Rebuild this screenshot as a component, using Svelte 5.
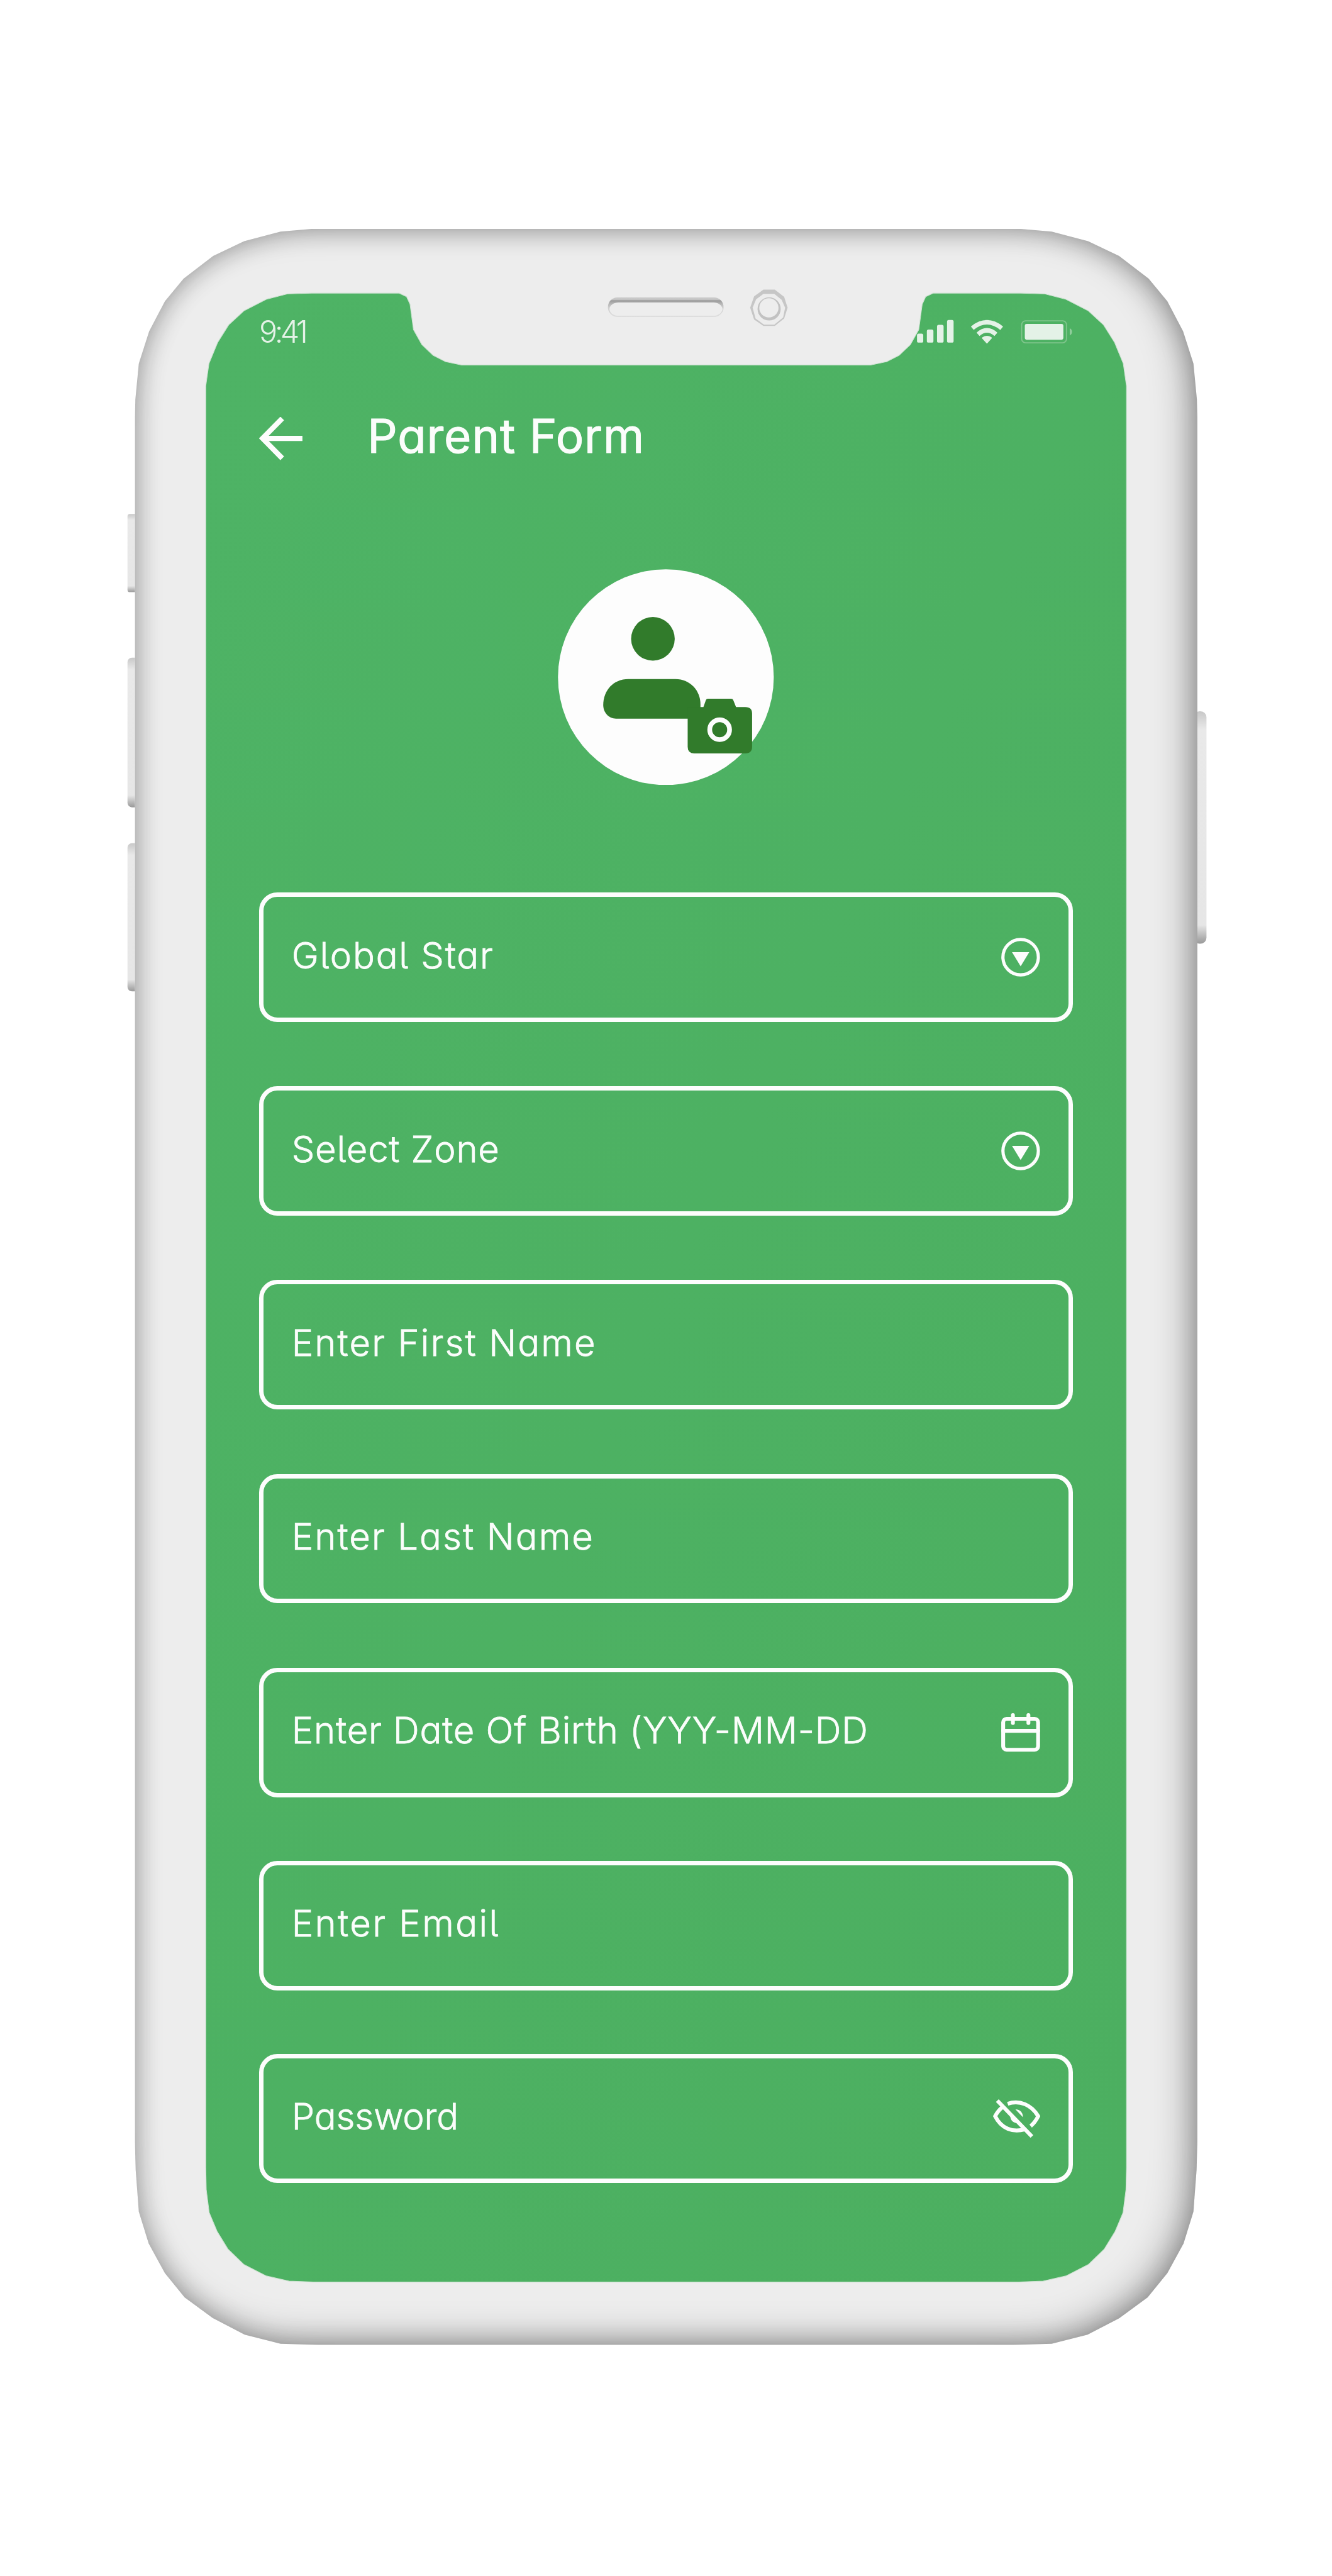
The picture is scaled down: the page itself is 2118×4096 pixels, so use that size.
<script>
  const fields = [
    { label: 'Global Star', icon: 'dropdown', tracking: 0.031 },
    { label: 'Select Zone', icon: 'dropdown', tracking: 0.014 },
    { label: 'Enter First Name', icon: '', tracking: 0.037 },
    { label: 'Enter Last Name', icon: '', tracking: 0.036 },
    { label: 'Enter Date Of Birth (YYY-MM-DD', icon: 'calendar', tracking: 0.015 },
    { label: 'Enter Email', icon: '', tracking: 0.042 },
    { label: 'Password', icon: 'eye-off', tracking: -0.001 }
  ];

  // Corner profiles of the handset, listed for the left half and mirrored to the right.
  const mirror = (pts) => pts.map(([x, y]) => [2706.5 - x, y]).reverse();
  const toPath = (pts) => 'M' + pts.map((p) => p.join(' ')).join('L') + 'Z';

  const bodyLeft = [
    [570, 4761.5], [497, 4743], [432, 4709], [375, 4667], [335, 4618], [302, 4557.6],
    [282, 4493], [275.6, 4408], [274, 4350], [274, 849], [275, 811], [282, 738.5],
    [303, 673], [335, 612], [373, 566], [433, 520], [496, 490], [570, 470.6], [633, 465]
  ];
  const screenLeft = [
    [636, 4636], [587, 4634], [541, 4623.6], [495, 4600], [463, 4569], [441, 4533],
    [425, 4495], [419, 4448], [418, 4403.6], [418, 784], [424.5, 738.5], [442, 696],
    [464.5, 660], [496, 631], [542, 607.6], [584, 597], [633, 595.5], [811, 595.5],
    [826, 602.6], [833, 618], [840, 669.6], [857, 700], [880, 722], [905, 734.7], [938, 741.5]
  ];
  const body = toPath([[647, 4763.5], ...bodyLeft, ...mirror([[647, 4763.5], ...bodyLeft])]);
  const screen = toPath([...screenLeft, ...mirror(screenLeft)]);
  const outside = 'M-500 -500H3200V5700H-500Z' + body;
</script>

<main class="stage">
  <svg class="handset" viewBox="0 0 2706 5232" aria-hidden="true">
    <defs>
      <clipPath id="body-clip"><path d={body} /></clipPath>
      <filter id="soft" filterUnits="userSpaceOnUse" x="0" y="200" width="2706" height="4900">
        <feGaussianBlur stdDeviation="26" />
      </filter>
      <filter id="softer" filterUnits="userSpaceOnUse" x="0" y="200" width="2706" height="4900">
        <feGaussianBlur stdDeviation="38" />
      </filter>
      <linearGradient id="key" x1="0" x2="0" y1="0" y2="1">
        <stop offset="0" stop-color="#c8c8c8" />
        <stop offset=".08" stop-color="#e9e9e9" />
        <stop offset=".92" stop-color="#e6e6e6" />
        <stop offset="1" stop-color="#999" />
      </linearGradient>
      <linearGradient id="green" x1="0" y1="0" x2="1" y2="1">
        <stop offset="0" stop-color="#4eb365" />
        <stop offset="1" stop-color="#4caf60" />
      </linearGradient>
      <linearGradient id="slot" x1="0" x2="0" y1="0" y2="1">
        <stop offset="0" stop-color="#cfcfcf" />
        <stop offset=".12" stop-color="#c2c2c2" />
        <stop offset=".17" stop-color="#999" />
        <stop offset=".25" stop-color="#aaa" />
        <stop offset=".5" stop-color="#ccc" />
        <stop offset="1" stop-color="#dedede" />
      </linearGradient>
    </defs>

    <rect x="259" y="1044" width="24" height="159" rx="5" fill="url(#key)" />
    <rect x="259" y="1336" width="24" height="304" rx="9" fill="url(#key)" />
    <rect x="259" y="1713" width="24" height="301" rx="9" fill="url(#key)" />
    <rect x="2425" y="1445" width="26" height="472" rx="12" fill="url(#key)" />

    <path d={body} fill="#ededed" />
    <g clip-path="url(#body-clip)" fill-rule="evenodd">
      <path d={outside} fill="#000" opacity=".29" filter="url(#soft)" />
      <path d={outside} fill="#000" opacity=".26" filter="url(#softer)" transform="translate(-20 -12)" />
    </g>
    <path d={screen} fill="url(#green)" stroke="#cfe3d3" stroke-width="1.5" />

    <rect x="1235" y="604" width="235" height="40" rx="20" fill="url(#slot)" />
    <path d="M1238 628C1239 619 1247 614.500 1257 614.500H1449C1459 614.500 1466 619 1468 628C1466 637 1459 641.500 1449 641.500H1257C1247 641.500 1239 637 1238 628Z" fill="#ededed" />
    <g class="lens">
      <path d="M1551 588.500H1574L1593 603L1600 625L1593 647L1574 662H1551L1532 649L1524 625L1532 602Z" fill="#c6c6c6" />
      <path d="M1551 597H1573L1588 609L1595 625L1591 645L1573 659.500H1552L1535 647L1529 625L1536 608Z" fill="#ededed" />
      <circle cx="1562.500" cy="627.500" r="23.500" fill="#c2c2c2" />
      <circle cx="1562" cy="625.500" r="19.500" fill="#ededed" />
    </g>
  </svg>

  <section class="app">
    <div class="status">
      <span class="time">9:41</span>
      <svg class="indicators" viewBox="60 55 960 155" aria-hidden="true">
        <g fill="#e4f2e7">
          <rect x="72" y="145" width="38" height="55" rx="10" />
          <rect x="132" y="120" width="40" height="80" rx="10" />
          <rect x="194" y="91" width="40" height="109" rx="10" />
          <rect x="255" y="62" width="40" height="138" rx="10" />
          <path d="M498 206L470 176Q466 171 471 167Q498 150 526 167Q530 171 526 176Z" />
          <rect x="729" y="86" width="235" height="96" rx="12" />
        </g>
        <g fill="none" stroke="#e4f2e7" stroke-width="27">
          <path d="M409 112Q498 40 588 112" />
          <path d="M444 149Q498 101 553 149" />
        </g>
        <rect x="710" y="67" width="273" height="134" rx="24" fill="none" stroke="#7fc58c" stroke-width="7" />
        <path d="M1003 112Q1017 118 1017 134Q1017 150 1003 156Z" fill="#8fcd9b" />
      </svg>
    </div>

    <header class="bar">
      <svg class="back" viewBox="0 0 88 88" aria-hidden="true">
        <path d="M88 43.500H10M47 3L7 43.500L47 84" />
      </svg>
      <h1>Parent Form</h1>
    </header>

    <svg class="avatar" viewBox="100 77 1318 1316" aria-hidden="true">
      <circle cx="759" cy="735" r="658" fill="#fdfdfd" />
      <g fill="#317b2b">
        <circle cx="680" cy="501" r="133" />
        <path d="M530 746H818C903 746 970 812 970 900V988H455C412 988 377 953 377 905C377 814 440 746 530 746Z" />
        <path d="M892 917H988L1003 875Q1006 866 1016 866H1157Q1167 866 1170 875L1187 917H1243Q1285 917 1285 957V1160Q1285 1200 1243 1200H931Q892 1200 892 1160Z" />
      </g>
      <circle cx="1087" cy="1055" r="60.500" fill="none" stroke="#fdfdfd" stroke-width="29" />
    </svg>

    <div class="form">
      {#each fields as field}
        <div class="field">
          <span class="label" style:letter-spacing="{field.tracking}em">{field.label}</span>
          {#if field.icon === 'dropdown'}
            <svg class="icon" viewBox="0 0 79 79" aria-hidden="true">
              <circle cx="39.500" cy="39.500" r="36" class="line" />
              <path d="M22 29.500H57L39.500 58Z" fill="#fdfdfd" />
            </svg>
          {:else if field.icon === 'calendar'}
            <svg class="icon" viewBox="0 0 79 79" aria-hidden="true">
              <g class="line thick">
                <rect x="4" y="11.500" width="71" height="63" rx="7" />
                <path d="M4 36H75M23.800 4V20M55.300 4V20" stroke-linecap="round" />
              </g>
            </svg>
          {:else if field.icon === 'eye-off'}
            <svg class="icon eye" viewBox="0 0 96.400 77.700" aria-hidden="true">
              <g class="line thick">
                <path d="M8.700 2.700L79 75.500" />
                <path d="M29.800 9C54 1 78 11 91.800 34.400C88 42 83 49 76.500 54.500" />
                <path d="M18.500 16.500C12 22 7.500 28 4.300 34.400C17 60 40 68 65 61" />
              </g>
              <path d="M45.500 20.500C55 20.500 61 27.500 60.700 36.500Z" fill="#fdfdfd" />
              <path d="M35 33C35 43 41 48.500 50 48.500Z" fill="#fdfdfd" />
            </svg>
          {/if}
        </div>
      {/each}
    </div>
  </section>
</main>

<style>
  /* 1rem covers 100 units of the 2706-unit-wide artboard. */
  :global(html) {
    font-size: calc(100vw / 27.06);
  }
  :global(body) {
    margin: 0;
    background: #fff;
  }
  .stage {
    position: relative;
    height: 52.32rem;
    overflow: hidden;
    color: #fbfdfb;
    font-family: Inter, 'Open Sans', sans-serif;
    font-feature-settings: 'cv11' 1, 'cv05' 1;
  }
  .handset {
    position: absolute;
    inset: 0;
    width: 27.06rem;
    height: 52.32rem;
  }
  .app {
    position: relative;
    display: flex;
    flex-direction: column;
    box-sizing: border-box;
    width: 16.53rem;
    margin: 0 auto;
    padding-top: 6.483rem;
  }
  .status {
    display: flex;
    justify-content: space-between;
    align-items: center;
    height: 0.517rem;
  }
  .time {
    padding-top: 0.02rem;
    font-size: 0.62rem;
    font-weight: 300;
    line-height: 1;
    color: #e4f2e7;
    white-space: nowrap;
    letter-spacing: -0.095em;
  }
  .indicators {
    width: 3.2rem;
    height: 0.517rem;
  }
  .bar {
    display: flex;
    align-items: center;
    gap: 1.32rem;
    height: 0.88rem;
    margin-top: 1.47rem;
  }
  .back {
    width: 0.88rem;
    height: 0.88rem;
    fill: none;
    stroke: #fdfdfd;
    stroke-width: 10.5;
  }
  h1 {
    margin: 0;
    padding-bottom: 0.11rem;
    font-size: 0.95rem;
    font-weight: 430;
    line-height: 1;
    white-space: nowrap;
    letter-spacing: 0.011em;
    -webkit-text-stroke: 0.014rem #fbfdfb;
  }
  .avatar {
    align-self: center;
    width: 4.39rem;
    height: 4.39rem;
    margin-top: 2.21rem;
  }
  .form {
    display: flex;
    flex-direction: column;
    gap: 1.308rem;
    margin-top: 2.18rem;
  }
  .field {
    display: flex;
    align-items: center;
    justify-content: space-between;
    box-sizing: border-box;
    height: 2.63rem;
    padding: 0 0.57rem 0 0.57rem;
    border: 0.09rem solid #fdfdfd;
    border-radius: 0.37rem;
  }
  .field:nth-last-child(-n + 2) {
    margin-top: -0.017rem;
  }
  .label {
    padding-bottom: 0.06rem;
    font-size: 0.74rem;
    font-weight: 350;
    line-height: 1;
    white-space: nowrap;
    -webkit-text-stroke: 0.01rem #fbfdfb;
  }
  .icon {
    width: 0.79rem;
    height: 0.79rem;
  }
  .eye {
    width: 0.964rem;
    height: 0.777rem;
  }
  .line {
    fill: none;
    stroke: #fdfdfd;
    stroke-width: 6.5;
  }
  .thick {
    stroke-width: 7.8;
  }
</style>
